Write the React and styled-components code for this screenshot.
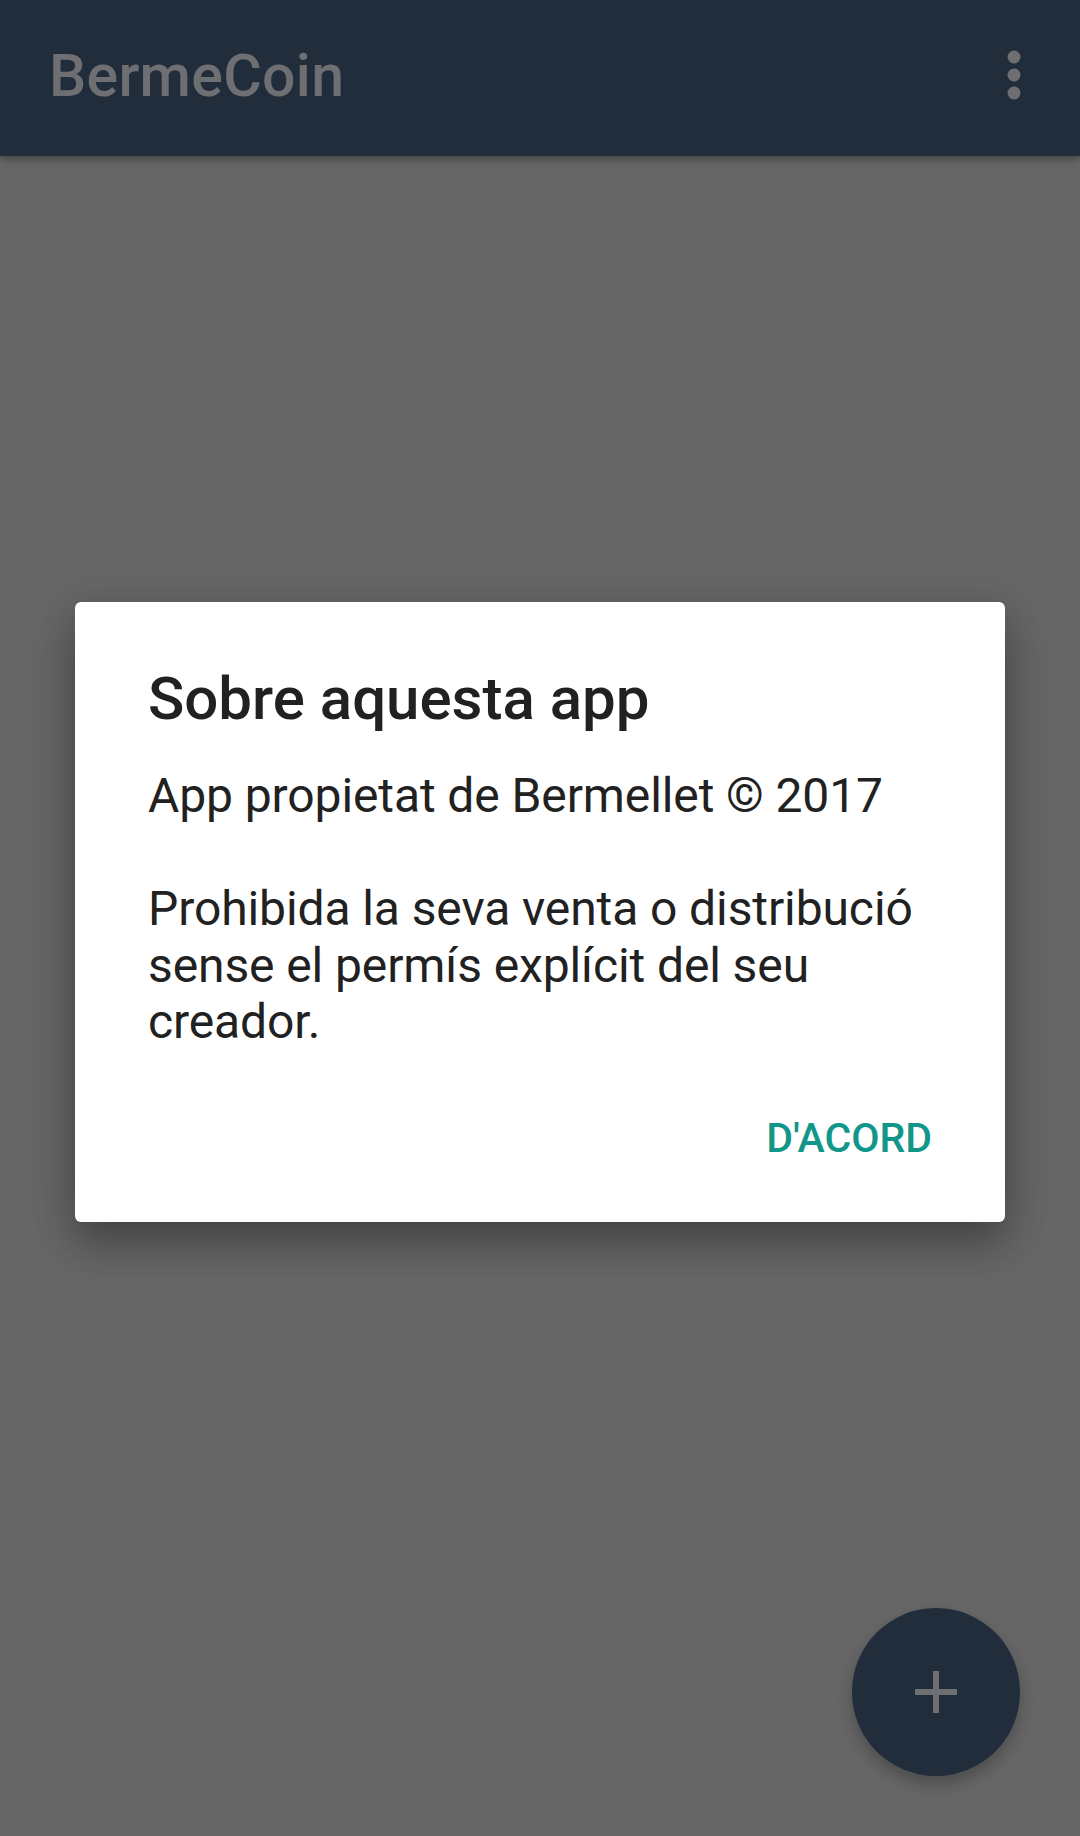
import React from 'react'
import styled, { createGlobalStyle } from 'styled-components'

const GlobalStyle = createGlobalStyle`
  html, body {
    margin: 0;
    padding: 0;
    height: 100%;
    background: #666666;
    font-family: Roboto, "Noto Sans", "Liberation Sans", sans-serif;
  }
  #root {
    height: 100%;
  }
`

const Screen = styled.div`
  position: relative;
  display: flex;
  flex-direction: column;
  width: 1080px;
  height: 1836px;
  overflow: hidden;
  background: #666666;
`

const AppBar = styled.header`
  flex: 0 0 156px;
  display: flex;
  align-items: center;
  justify-content: space-between;
  padding: 0 46px 0 49px;
  background: #212d3b;
  box-shadow: 0 3px 8px rgba(0, 0, 0, 0.35);
  z-index: 1;
`

const AppTitle = styled.h1`
  margin: 0 0 6px;
  font-size: 59px;
  font-weight: 500;
  color: #6d6f72;
  letter-spacing: 0.3px;
`

const MenuButton = styled.button`
  display: flex;
  align-items: center;
  justify-content: center;
  width: 40px;
  height: 60px;
  padding: 0;
  border: 0;
  background: transparent;
  margin-bottom: 6px;
`

const Content = styled.main`
  flex: 1;
`

const Overlay = styled.div`
  position: absolute;
  inset: 0;
  display: flex;
  align-items: center;
  justify-content: center;
  padding-bottom: 12px;
  z-index: 2;
`

const Dialog = styled.div`
  width: 930px;
  box-sizing: border-box;
  padding: 62px 73px 59px;
  background: #ffffff;
  border-radius: 6px;
  box-shadow: 0 24px 38px rgba(0, 0, 0, 0.22), 0 9px 46px rgba(0, 0, 0, 0.18);
`

const DialogTitle = styled.h2`
  margin: 0;
  font-size: 60px;
  font-weight: 500;
  line-height: 70px;
  color: #212121;
`

const DialogBody = styled.p`
  margin: 34px 0 0;
  font-size: 48px;
  font-weight: 400;
  line-height: 56.5px;
  letter-spacing: -0.1px;
  color: #212121;
  white-space: pre-line;
`

const Actions = styled.div`
  display: flex;
  justify-content: flex-end;
  margin-top: 63px;
`

const TextButton = styled.button`
  padding: 0;
  border: 0;
  background: transparent;
  font-family: inherit;
  font-size: 41px;
  font-weight: 500;
  line-height: 49px;
  color: #11968a;
  text-transform: uppercase;
`

const Fab = styled.button`
  position: absolute;
  right: 60px;
  bottom: 60px;
  width: 168px;
  height: 168px;
  display: flex;
  align-items: center;
  justify-content: center;
  padding: 0;
  border: 0;
  border-radius: 50%;
  background: #212d3b;
  box-shadow: 0 8px 16px rgba(0, 0, 0, 0.25);
  z-index: 1;
`

const MoreIcon = () => (
  <svg width="14" height="50" viewBox="0 0 14 50">
    <circle cx="7" cy="7" r="6.5" fill="#6d6f72" />
    <circle cx="7" cy="25" r="6.5" fill="#6d6f72" />
    <circle cx="7" cy="43" r="6.5" fill="#6d6f72" />
  </svg>
)

const PlusIcon = () => (
  <svg width="44" height="44" viewBox="0 0 44 44">
    <rect x="19" y="1" width="6" height="42" fill="#6d6f72" />
    <rect x="1" y="19" width="42" height="6" fill="#6d6f72" />
  </svg>
)

export default function App() {
  return (
    <>
      <GlobalStyle />
      <Screen>
        <AppBar>
          <AppTitle>BermeCoin</AppTitle>
          <MenuButton aria-label="Més opcions">
            <MoreIcon />
          </MenuButton>
        </AppBar>
        <Content />
        <Fab aria-label="Afegir">
          <PlusIcon />
        </Fab>
        <Overlay>
          <Dialog>
            <DialogTitle>Sobre aquesta app</DialogTitle>
            <DialogBody>
              {'App propietat de Bermellet © 2017\n\nProhibida la seva venta o distribució sense el permís explícit del seu creador.'}
            </DialogBody>
            <Actions>
              <TextButton>D'acord</TextButton>
            </Actions>
          </Dialog>
        </Overlay>
      </Screen>
    </>
  )
}
